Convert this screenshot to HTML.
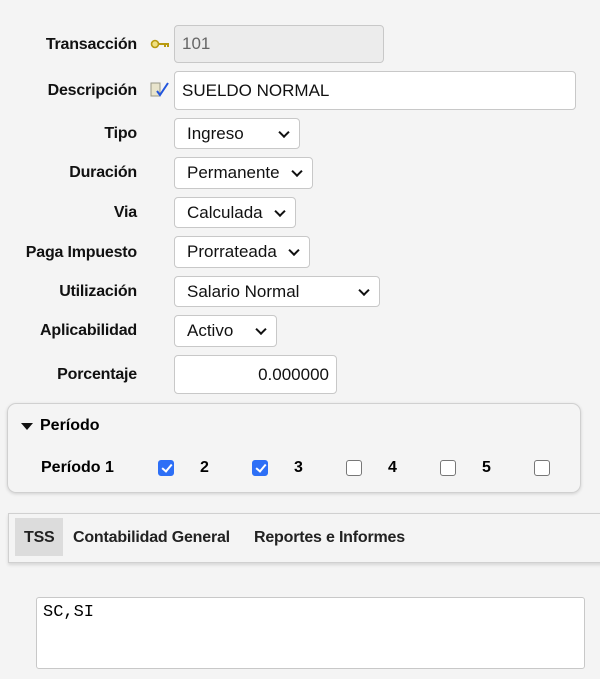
<!DOCTYPE html>
<html><head><meta charset="utf-8"><style>
body{margin:0;width:600px;height:679px;background:#f4f4f4;font-family:"Liberation Sans",Arial,sans-serif;position:relative;overflow:hidden}
.l{position:absolute;right:463px;font-size:16px;font-weight:bold;color:#111;white-space:nowrap;letter-spacing:-0.2px}
.f{position:absolute;left:174px;box-sizing:border-box;border:1px solid #c8c8c8;border-radius:4px;background:#fff;font-size:17px;color:#111;padding-left:7px;display:flex;align-items:center}
.s{padding-left:12px}
.s::after{content:"";position:absolute;right:11px;top:50%;width:6px;height:6px;border-right:2.4px solid #111;border-bottom:2.4px solid #111;transform:translateY(-70%) rotate(45deg)}
.cb{position:absolute;top:460px;width:16px;height:16px;box-sizing:border-box;border:1px solid #777;border-radius:3px;background:#fff}
.cb.on{background:#2d6ff6;border-color:#2d6ff6}
.cb.on::after{content:"";position:absolute;left:4.5px;top:1px;width:4px;height:8px;border-right:2px solid #fff;border-bottom:2px solid #fff;transform:rotate(40deg)}
.n{position:absolute;top:459px;font-size:16px;font-weight:bold}
.t{position:absolute;top:529px;font-size:16px;font-weight:bold;color:#222;letter-spacing:-0.2px}
</style></head><body>
<div class="l" style="top:36px">Transacción</div>
<svg style="position:absolute;left:150px;top:39px" width="20" height="10"><circle cx="5" cy="5" r="3.5" fill="#f0e080" stroke="#b89a10" stroke-width="1.6"/><path d="M9 5h10M15 5v3M18 5v3" stroke="#b89a10" stroke-width="2"/></svg>
<div class="f" style="top:25px;width:210px;height:38px;background:#ececec;color:#666">101</div>
<div class="l" style="top:82px">Descripción</div>
<svg style="position:absolute;left:150px;top:81px" width="20" height="18"><rect x="1" y="2" width="9" height="13" fill="#e8e4cc" stroke="#998" stroke-width="1"/><path d="M7 10l3 4 8-12" fill="none" stroke="#2255dd" stroke-width="2"/></svg>
<div class="f" style="top:71px;width:402px;height:39px">SUELDO NORMAL</div>
<div class="l" style="top:125px">Tipo</div>
<div class="f s" style="top:118px;width:126px;height:31px">Ingreso</div>
<div class="l" style="top:164px">Duración</div>
<div class="f s" style="top:157px;width:139px;height:32px">Permanente</div>
<div class="l" style="top:204px">Via</div>
<div class="f s" style="top:197px;width:122px;height:31px">Calculada</div>
<div class="l" style="top:244px">Paga Impuesto</div>
<div class="f s" style="top:236px;width:136px;height:32px">Prorrateada</div>
<div class="l" style="top:283px">Utilización</div>
<div class="f s" style="top:276px;width:206px;height:31px">Salario Normal</div>
<div class="l" style="top:322px">Aplicabilidad</div>
<div class="f s" style="top:315px;width:103px;height:32px">Activo</div>
<div class="l" style="top:366px">Porcentaje</div>
<div class="f" style="top:355px;width:163px;height:39px;justify-content:flex-end;padding-right:7px">0.000000</div>
<div style="position:absolute;left:7px;top:403px;width:574px;height:90px;box-sizing:border-box;border:1px solid #d0d0d0;border-radius:9px;box-shadow:0 1px 3px rgba(0,0,0,.15)"></div>
<div style="position:absolute;left:21px;top:423px;width:0;height:0;border-left:6px solid transparent;border-right:6px solid transparent;border-top:7px solid #111"></div>
<div style="position:absolute;left:40px;top:417px;font-size:16px;font-weight:bold">Período</div>
<div class="n" style="left:41px">Período 1</div>
<div class="cb on" style="left:158px"></div><div class="n" style="left:200px">2</div>
<div class="cb on" style="left:252px"></div><div class="n" style="left:294px">3</div>
<div class="cb" style="left:346px"></div><div class="n" style="left:388px">4</div>
<div class="cb" style="left:440px"></div><div class="n" style="left:482px">5</div>
<div class="cb" style="left:534px"></div>
<div style="position:absolute;left:8px;top:513px;width:600px;height:50px;box-sizing:border-box;border:1px solid #d0d0d0;background:#f4f4f4;box-shadow:0 2px 3px rgba(0,0,0,.12)"></div>
<div style="position:absolute;left:15px;top:518px;width:48px;height:38px;background:#dcdcdc"></div>
<div class="t" style="left:24px">TSS</div>
<div class="t" style="left:73px">Contabilidad General</div>
<div class="t" style="left:254px">Reportes e Informes</div>
<div style="position:absolute;left:36px;top:597px;width:549px;height:72px;box-sizing:border-box;border:1px solid #c8c8c8;border-radius:3px;background:#fff;font-family:'Liberation Mono',monospace;font-size:17px;padding:5px 6px">SC,SI</div>
</body></html>
